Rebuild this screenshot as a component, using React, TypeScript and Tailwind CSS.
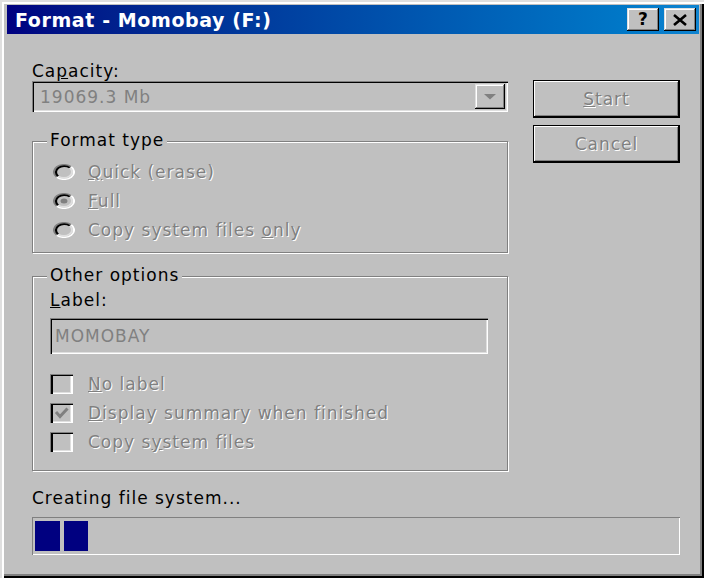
import React from "react";

const DIS = "text-[#808080] [text-shadow:1px_1px_0_#fff]";
const SUNKEN =
  "shadow-[inset_1px_1px_#808080,inset_2px_2px_#000,inset_-1px_-1px_#fff,inset_-2px_-2px_#dfdfdf]";
const CHECKBOX =
  "shadow-[inset_1px_1px_#808080,inset_3px_2px_#000,inset_-2px_-1px_#fff,inset_-3px_-2px_#dfdfdf]";
const RAISED =
  "shadow-[inset_-1px_-1px_#000,inset_1px_1px_#dfdfdf,inset_-2px_-2px_#808080,inset_2px_2px_#fff]";

function TitleBtn({ children }: { children: React.ReactNode }) {
  return (
    <div
      className={`flex h-[23px] w-[32px] items-center justify-center bg-[#c0c0c0] ${RAISED}`}
    >
      {children}
    </div>
  );
}

function Radio({ checked }: { checked?: boolean }) {
  return (
    <svg width="22" height="16" viewBox="0 0 12 12" preserveAspectRatio="none" className="shrink-0">
      <circle cx="6" cy="6" r="4.4" fill="#c0c0c0" />
      <path d="M2.11 9.89 A5.5 5.5 0 0 1 9.89 2.11" fill="none" stroke="#808080" strokeWidth="1.1" />
      <path d="M9.89 2.11 A5.5 5.5 0 0 1 2.11 9.89" fill="none" stroke="#ffffff" strokeWidth="1.1" />
      <path d="M2.82 9.18 A4.5 4.5 0 0 1 9.18 2.82" fill="none" stroke="#000000" strokeWidth="1.2" />
      <path d="M9.18 2.82 A4.5 4.5 0 0 1 2.82 9.18" fill="none" stroke="#dfdfdf" strokeWidth="1.1" />
      {checked && <circle cx="6" cy="6" r="1.9" fill="#808080" />}
    </svg>
  );
}

function Check({ checked }: { checked?: boolean }) {
  return (
    <div className={`relative h-[20px] w-[23px] shrink-0 bg-[#c0c0c0] ${CHECKBOX}`}>
      {checked && (
        <svg width="23" height="20" viewBox="0 0 23 20" className="absolute left-0 top-0">
          <path d="M6 9 L10 13.5 L17.5 5.5" fill="none" stroke="#808080" strokeWidth="3" />
        </svg>
      )}
    </div>
  );
}

function Group({
  title,
  className,
  children,
}: {
  title: string;
  className?: string;
  children: React.ReactNode;
}) {
  return (
    <div
      className={`relative border border-[#808080] shadow-[1px_1px_0_#fff,inset_1px_1px_0_#fff] ${className ?? ""}`}
    >
      <span className="absolute -top-[12px] left-[14px] bg-[#c0c0c0] px-[3px] leading-[20px]">
        {title}
      </span>
      {children}
    </div>
  );
}

function RadioRow({ checked, children }: { checked?: boolean; children: React.ReactNode }) {
  return (
    <div className="flex h-[29px] items-center">
      <Radio checked={checked} />
      <span className={`ml-[13px] ${DIS}`}>{children}</span>
    </div>
  );
}

function CheckRow({ checked, children }: { checked?: boolean; children: React.ReactNode }) {
  return (
    <div className="flex h-[29px] items-center">
      <Check checked={checked} />
      <span className={`ml-[15px] ${DIS}`}>{children}</span>
    </div>
  );
}

function Button({ children }: { children: React.ReactNode }) {
  return (
    <div
      className={`flex h-[38px] w-full items-center justify-center border border-black bg-[#c0c0c0] shadow-[inset_-1px_-1px_#000,inset_1px_1px_#fff,inset_-2px_-2px_#808080] ${DIS}`}
    >
      <span>{children}</span>
    </div>
  );
}

export default function App() {
  return (
    <div className="min-h-screen bg-white font-['DejaVu_Sans',sans-serif] text-[17px] leading-[20px] tracking-[1px] text-black">
      <div className="flex h-[578px] w-[704px] flex-col bg-[#c0c0c0] pl-[7px] pr-[5px] pt-[5px] shadow-[inset_2px_2px_#dfdfdf,inset_4px_4px_#fff,inset_-2px_-2px_#000,inset_-4px_-4px_#808080]">
        {/* Title bar */}
        <div className="flex h-[29px] items-center justify-between bg-linear-to-r from-[#000080] to-[#1084d0] pl-[8px] pr-[3px]">
          <span className="text-[19px] font-bold tracking-[0.6px] text-white">
            Format - Momobay (F:)
          </span>
          <div className="flex gap-[5px]">
            <TitleBtn>
              <span className="text-[17px] font-bold leading-none tracking-normal text-black">?</span>
            </TitleBtn>
            <TitleBtn>
              <svg width="16" height="12" viewBox="0 0 16 12">
                <path d="M2 1 L14 11 M14 1 L2 11" stroke="#000" strokeWidth="2.6" fill="none" />
              </svg>
            </TitleBtn>
          </div>
        </div>

        {/* Body */}
        <div className="flex flex-1 flex-col pl-[25px] pr-[19px]">
          <div className="flex gap-[25px]">
            {/* Left column */}
            <div className="flex w-[476px] flex-col pt-[27px]">
              <div className="h-[20px]">
                Ca<u>p</u>acity:
              </div>
              <div className={`flex h-[31px] items-center justify-between bg-[#c0c0c0] pl-[8px] pr-[3px] ${SUNKEN}`}>
                <span className="text-[#808080]">19069.3 Mb</span>
                <div className={`flex h-[25px] w-[30px] items-center justify-center bg-[#c0c0c0] ${RAISED}`}>
                  <svg width="12" height="6" viewBox="0 0 12 6">
                    <polygon points="0,0 12,0 6,5.5" fill="#808080" />
                  </svg>
                </div>
              </div>

              <Group title="Format type" className="mt-[29px] pb-[8px] pl-[20px] pt-[15px]">
                <RadioRow>
                  <u>Q</u>uick (erase)
                </RadioRow>
                <RadioRow checked>
                  <u>F</u>ull
                </RadioRow>
                <RadioRow>
                  Copy system files <u>o</u>nly
                </RadioRow>
              </Group>

              <Group title="Other options" className="mt-[23px] pb-[14px] pl-[17px] pt-[13px]">
                <div className="h-[20px]">
                  <u>L</u>abel:
                </div>
                <div className={`mt-[8px] flex h-[36px] w-[438px] items-center bg-[#c0c0c0] pl-[5px] ${SUNKEN}`}>
                  <span className="text-[#808080]">MOMOBAY</span>
                </div>
                <div className="mt-[15px]">
                  <CheckRow>
                    <u>N</u>o label
                  </CheckRow>
                  <CheckRow checked>
                    <u>D</u>isplay summary when finished
                  </CheckRow>
                  <CheckRow>
                    Copy s<u>y</u>stem files
                  </CheckRow>
                </div>
              </Group>
            </div>

            {/* Right column */}
            <div className="flex w-[147px] flex-col gap-[7px] pt-[46px]">
              <Button>
                <u>S</u>tart
              </Button>
              <Button>Cancel</Button>
            </div>
          </div>

          <div className="mt-[17px] h-[20px]">Creating file system...</div>
          <div className="mt-[9px] flex h-[38px] items-start gap-[4px] pl-[3px] pt-[4px] shadow-[inset_1px_1px_#808080,inset_-1px_-1px_#fff]">
            <div className="h-[30px] w-[25px] bg-[#000080]" />
            <div className="h-[30px] w-[24px] bg-[#000080]" />
          </div>
        </div>
      </div>
    </div>
  );
}
